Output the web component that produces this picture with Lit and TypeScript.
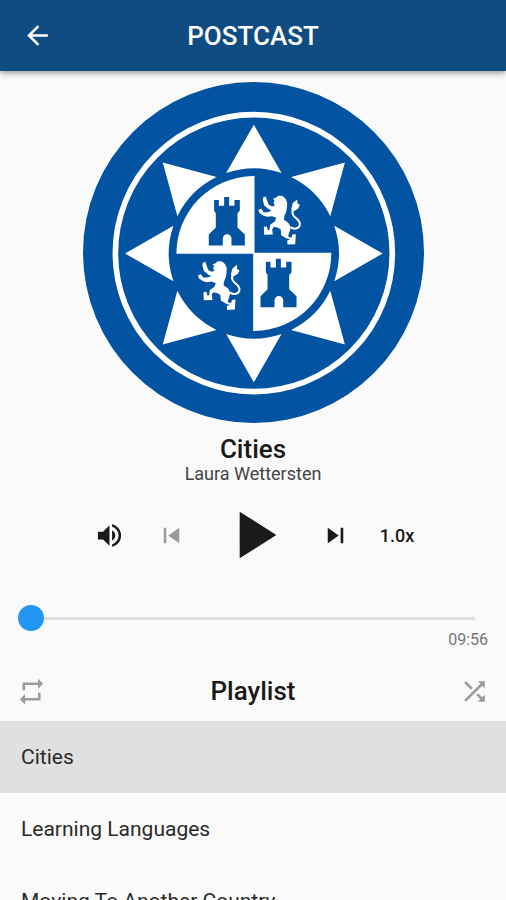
import { LitElement, html, css, svg } from "lit";
import { customElement, property, state } from "lit/decorators.js";
import { classMap } from "lit/directives/class-map.js";

const ICONS = {
  back: "M20 11H7.83l5.59-5.59L12 4l-8 8 8 8 1.41-1.41L7.83 13H20v-2z",
  volume:
    "M3 9v6h4l5 5V4L7 9H3zm13.5 3c0-1.77-1.02-3.29-2.5-4.03v8.05c1.48-.73 2.5-2.25 2.5-4.02zM14 3.23v2.06c2.89.86 5 3.54 5 6.71s-2.11 5.85-5 6.71v2.06c4.01-.91 7-4.49 7-8.77s-2.99-7.86-7-8.77z",
  previous: "M6 6h2v12H6zm3.5 6l8.5 6V6z",
  play: "M8 5v14l11-7z",
  next: "M6 18l8.5-6L6 6v12zM16 6v12h2V6h-2z",
  repeat: "M7 7h10v3l4-4-4-4v3H5v6h2V7zm10 10H7v-3l-4 4 4 4v-3h12v-6h-2v4z",
  shuffle:
    "M10.59 9.17L5.41 4 4 5.41l5.17 5.17 1.42-1.41zM14.5 4l2.04 2.04L4 18.59 5.41 20 17.96 7.46 20 9.5V4h-5.5zm.33 9.41l-1.41 1.41 3.13 3.13L14.5 20H20v-5.5l-2.04 2.04-3.13-3.13z",
};

@customElement("app-icon")
class AppIcon extends LitElement {
  @property() name: keyof typeof ICONS = "play";

  static styles = css`
    :host {
      display: block;
      width: 31px;
      height: 31px;
    }
    .glyph {
      display: block;
      width: 100%;
      height: 100%;
      fill: currentColor;
    }
  `;

  render() {
    return html`<svg class="glyph" viewBox="0 0 24 24" aria-hidden="true">
      <path d=${ICONS[this.name]}></path>
    </svg>`;
  }
}

// Round emblem: a sun of eight rays around a quartered shield of castles and lions.
@customElement("sun-emblem")
class SunEmblem extends LitElement {
  static styles = css`
    :host {
      display: block;
    }
    .emblem {
      display: block;
      width: 100%;
    }
    .blue {
      fill: #0254a2;
    }
    .white {
      fill: #fff;
    }
    .ring {
      fill: none;
      stroke: #fff;
      stroke-width: 17;
    }
  `;

  private castle(x: number, y: number) {
    return svg`<path class="blue" transform="translate(${x} ${y})"
      d="M16 9h14v17h16V0h15v26h16V9h16v32l-7 7v43l22 21v33H68v-21a13 13 0 0 0-26 0v21H0v-33l21-21V48l-5-7z"></path>`;
  }

  private lion(x: number, y: number) {
    return svg`<g transform="translate(${x} ${y})">
      <path class="white" d="M20 16l8-3 4 13 5 12 10 5 8-3-4-7 3-8-5-5 8-2 8-7 13 1 9 8 5 12-1 14-2 13-5 12-2 12 13 9 8 13-5 17-3 8 3 6 8-1 1-8 11-1-2 30-23 1-1-12 9-3-12-4-15-9-1-16-8-6-13-3-5 7 2 16-26 1-1-24 9-1 3 11 5-1 2-15 14-10 4-11-12-5-15 2-11-3-13-9-2-9 9-3 6 10 13 0 11-4-9-5-13-11-4-16z"></path>
      <path class="white" d="M104 51l5-18 13-11 1 13 7 3-5 11-13 8z"></path>
      <path d="M109 51c-6 17 6 24 14 31 11 11 9 25-6 27-6 2-10-1-15-4" fill="none" stroke="#fff" stroke-width="6"></path>
    </g>`;
  }

  render() {
    const rays = [0, 45, 90, 135, 180, 225, 270, 315];
    return html`<svg class="emblem" viewBox="8 6 1022 1022" role="img" aria-label="Podcast cover">
      <circle class="blue" cx="519" cy="517" r="511"></circle>
      <circle class="ring" cx="520" cy="519" r="415"></circle>
      ${rays.map(
        (a) => svg`<path class="white" transform="rotate(${a} 520 520)"
          d="M520 134L603 279A255 255 0 0 0 437 279z"></path>`
      )}
      <path class="white" d="M518 288A232 232 0 0 0 288 521H522V288z"></path>
      <path class="white" d="M522 752A232 232 0 0 0 752 518H518V752z"></path>
      ${this.castle(385, 351)} ${this.castle(540, 536)}
      ${this.lion(528, 336)} ${this.lion(347, 532)}
    </svg>`;
  }
}

@customElement("app-root")
class AppRoot extends LitElement {
  @state() private current = 0;

  private tracks = ["Cities", "Learning Languages", "Moving To Another Country"];

  static styles = css`
    :host {
      display: flex;
      flex-direction: column;
      height: 100vh;
      overflow: hidden;
      background: #fafafa;
      color: #1a1a1a;
      font-family: Roboto, "Liberation Sans", sans-serif;
    }
    button {
      display: flex;
      align-items: center;
      justify-content: center;
      padding: 0;
      border: 0;
      background: none;
      color: inherit;
      font: inherit;
      cursor: pointer;
    }
    h1,
    h2,
    p,
    ul {
      margin: 0;
      padding: 0;
      font-weight: 500;
    }
    .bar {
      flex: none;
      display: grid;
      grid-template-columns: 74px 1fr 74px;
      align-items: center;
      height: 71px;
      background: #0f4c81;
      color: #fff;
      box-shadow: 0 2px 6px rgba(0, 0, 0, 0.4);
    }
    .bar h1 {
      font-size: 26px;
      line-height: 32px;
      text-align: center;
    }
    .player {
      flex: none;
      display: flex;
      flex-direction: column;
      align-items: center;
      padding-top: 11px;
    }
    .cover {
      width: 68%;
      max-width: 341px;
    }
    .title {
      margin-top: 11px;
      font-size: 26px;
      line-height: 30px;
    }
    .author {
      font-size: 18px;
      line-height: 20px;
      font-weight: 400;
      color: #444;
    }
    .controls {
      display: flex;
      align-items: center;
      margin-top: 11px;
    }
    .control {
      width: 62px;
      height: 62px;
      font-size: 18px;
      font-weight: 500;
    }
    .control:disabled {
      color: #9b9b9b;
      cursor: default;
    }
    .play {
      width: 102px;
      height: 80px;
    }
    .play app-icon {
      width: 80px;
      height: 80px;
    }
    .progress {
      align-self: stretch;
      display: flex;
      flex-direction: column;
      margin: 30px 18px 0;
    }
    .seek {
      appearance: none;
      width: 100%;
      height: 26px;
      margin: 0;
      background: linear-gradient(#dedede, #dedede) center / calc(100% - 26px) 3px no-repeat;
    }
    .seek::-webkit-slider-thumb {
      appearance: none;
      width: 26px;
      height: 26px;
      border-radius: 50%;
      background: #2196f3;
    }
    .time {
      font-size: 16px;
      line-height: 18px;
      text-align: right;
      font-weight: 400;
      color: #777;
    }
    .heading {
      flex: none;
      display: flex;
      align-items: center;
      justify-content: space-between;
      height: 60px;
      margin-top: 12px;
      padding: 0 16px;
    }
    .heading h2 {
      font-size: 26px;
      line-height: 32px;
    }
    .toggle {
      color: #9b9b9b;
    }
    .list {
      flex: 1;
      min-height: 0;
      overflow-y: auto;
      scrollbar-width: none;
      list-style: none;
    }
    .track {
      justify-content: flex-start;
      width: 100%;
      height: 72px;
      padding: 0 21px;
      font-size: 21px;
      font-weight: 400;
      color: #2a2a2a;
    }
    .track.current {
      background: #e0e0e0;
    }
  `;

  render() {
    return html`
      <header class="bar">
        <button aria-label="Back"><app-icon name="back"></app-icon></button>
        <h1>POSTCAST</h1>
      </header>
      <section class="player">
        <sun-emblem class="cover"></sun-emblem>
        <h2 class="title">${this.tracks[this.current]}</h2>
        <p class="author">Laura Wettersten</p>
        <div class="controls">
          <button class="control" aria-label="Volume"><app-icon name="volume"></app-icon></button>
          <button
            class="control"
            aria-label="Previous"
            ?disabled=${this.current === 0}
            @click=${() => this.current--}
          >
            <app-icon name="previous"></app-icon>
          </button>
          <button class="play" aria-label="Play"><app-icon name="play"></app-icon></button>
          <button
            class="control"
            aria-label="Next"
            ?disabled=${this.current === this.tracks.length - 1}
            @click=${() => this.current++}
          >
            <app-icon name="next"></app-icon>
          </button>
          <button class="control">1.0x</button>
        </div>
        <div class="progress">
          <input class="seek" type="range" min="0" max="596" .value=${"0"} aria-label="Position" />
          <p class="time">09:56</p>
        </div>
      </section>
      <div class="heading">
        <button class="toggle" aria-label="Repeat"><app-icon name="repeat"></app-icon></button>
        <h2>Playlist</h2>
        <button class="toggle" aria-label="Shuffle"><app-icon name="shuffle"></app-icon></button>
      </div>
      <ul class="list">
        ${this.tracks.map(
          (name, i) => html`<li>
            <button
              class=${classMap({ track: true, current: i === this.current })}
              @click=${() => (this.current = i)}
            >
              ${name}
            </button>
          </li>`
        )}
      </ul>
    `;
  }
}
